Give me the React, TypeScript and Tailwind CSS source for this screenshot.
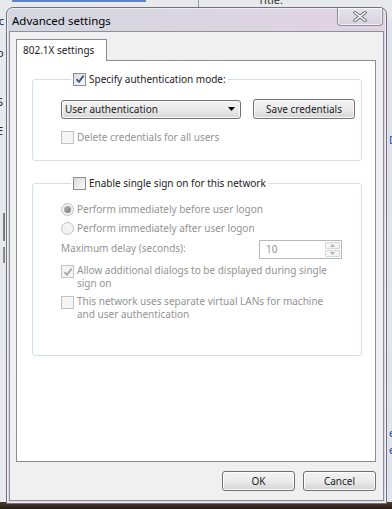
import React from "react";

function CheckBox({ checked = false, disabled = false }: { checked?: boolean; disabled?: boolean }) {
  return (
    <span
      className={`flex h-[13px] w-[13px] shrink-0 items-center justify-center border ${
        disabled ? "border-[#c3c3c3] bg-[#f4f4f4]" : "border-[#8e8f8f] bg-gradient-to-br from-[#dcdcdc] to-[#fbfbfb]"
      }`}
    >
      {checked && (
        <svg width="10" height="10" viewBox="0 0 10 10">
          <path
            d="M1.5 5.2 L4 7.8 L8.6 1.6"
            fill="none"
            stroke={disabled ? "#a8a8a8" : "#3f5584"}
            strokeWidth="1.8"
          />
        </svg>
      )}
    </span>
  );
}

function Radio({ checked = false }: { checked?: boolean }) {
  return (
    <span className="flex h-[13px] w-[13px] shrink-0 items-center justify-center rounded-full border border-[#c3c3c3] bg-[#f2f2f2]">
      {checked && <span className="h-[7px] w-[7px] rounded-full bg-gradient-to-br from-[#b8b8b8] to-[#7e7e7e]" />}
    </span>
  );
}

function Button({ label, className = "" }: { label: string; className?: string }) {
  return (
    <div
      className={`flex h-[20px] items-center justify-center rounded-[3px] border border-[#707070] bg-gradient-to-b from-[#f2f2f2] via-[#ebebeb] to-[#d4d4d4] text-[#1b1b1b] shadow-[inset_0_0_0_1px_#fcfcfc] ${className}`}
    >
      {label}
    </div>
  );
}

export default function App() {
  const disabledText = "text-[#939393]";

  return (
    <div className="relative h-[509px] w-[392px] overflow-hidden bg-[#e7e9ec] font-['Noto_Sans',sans-serif] text-[10px] leading-[13px] text-[#1b1b1b]">
      {/* windows behind the dialog */}
      <div className="absolute left-[12px] top-0 h-[2px] w-[134px] bg-[#5d86c4]" />
      <div className="absolute left-[198px] top-0 h-[8px] w-px bg-[#9a9a9a]" />
      <div className="absolute left-[258px] top-[-7px] text-[11px] text-[#333]">Title:</div>
      <div className="absolute left-[-4px] top-[14px] text-[11px] text-[#222]">ic</div>
      <div className="absolute left-[-3px] top-[46px] text-[11px] text-[#222]">o</div>
      <div className="absolute left-[-3px] top-[95px] text-[11px] text-[#222]">S</div>
      <div className="absolute left-[-3px] top-[124px] text-[11px] text-[#222]">E</div>
      <div className="absolute left-[3px] top-[213px] h-[28px] w-[2px] bg-[#7a7a7a]" />
      <div className="absolute left-[3px] top-[247px] h-[16px] w-[2px] bg-[#8a8a8a]" />
      <div className="absolute left-[386px] top-[20px] h-[500px] w-[6px] bg-[#dfe3ec]" />
      <div className="absolute left-[389px] top-[133px] text-[11px] text-[#2b4f9a]">D</div>
      <div className="absolute left-[389px] top-[426px] text-[11px] text-[#2b4f9a]">e</div>
      <div className="absolute left-[389px] top-[443px] text-[11px] text-[#2b4f9a]">e</div>
      <div className="absolute bottom-0 left-0 h-[7px] w-full bg-gradient-to-b from-[#4a3a30] to-[#2a1e17]" />

      {/* dialog window */}
      <div className="relative ml-[6px] mt-[7px] flex h-[497px] w-[381px] flex-col rounded-t-[7px] border border-[#6f727b] bg-gradient-to-br from-[#d2d7df] via-[#e2d3e4] to-[#d9d8e6] px-[2px] pb-[2px] shadow-[inset_0_0_0_1px_rgba(255,255,255,0.6)]">
        <div className="flex h-[24px] items-start">
          <span className="ml-[3px] mt-[6px] text-[11.5px] leading-[14px] text-black">Advanced settings</span>
          <div className="ml-auto mr-[1px] flex h-[18px] w-[46px] items-center justify-center rounded-b-[4px] border border-t-0 border-[#8a8d96] bg-gradient-to-b from-[#e8e4ee] to-[#d6d1de] shadow-[inset_0_0_0_1px_rgba(255,255,255,0.7)]">
            <svg width="14" height="11" viewBox="0 0 14 11">
              <path d="M2 1.5 L12 9.5 M12 1.5 L2 9.5" stroke="#6c6f78" strokeWidth="3.4" strokeLinecap="square" />
              <path d="M2 1.5 L12 9.5 M12 1.5 L2 9.5" stroke="#ffffff" strokeWidth="1.6" strokeLinecap="square" />
            </svg>
          </div>
        </div>

        {/* client area */}
        <div className="flex flex-1 flex-col border border-[#8d9098] bg-[#f0f0f0] pb-[9px] pl-[6px] pr-[7px] pt-[7px]">
          <div className="flex">
            <div className="relative z-10 -mb-px flex h-[22px] w-[91px] items-center border border-b-0 border-[#898c95] bg-white pl-[6px] pb-[1px]">
              802.1X settings
            </div>
          </div>

          <div className="flex h-[402px] flex-col border border-[#898c95] bg-white pl-[15px] pr-[13px] pt-[11px]">
            {/* group 1 */}
            <fieldset className="min-w-0 rounded-[3px] border border-[#d5dfe5] pb-[16px] pl-[28px] pr-[3px]">
              <legend className="ml-[10px] flex h-[14px] items-center gap-[3px] px-[2px]">
                <CheckBox checked />
                <span>Specify authentication mode:</span>
              </legend>
              <div className="mt-[13px] flex items-center">
                <div className="flex h-[19px] w-[180px] items-center rounded-[3px] border border-[#707070] bg-gradient-to-b from-[#f2f2f2] via-[#ebebeb] to-[#d6d6d6] pl-[3px] pr-[5px] shadow-[inset_0_0_0_1px_#fcfcfc]">
                  <span>User authentication</span>
                  <svg className="ml-auto" width="7" height="4" viewBox="0 0 7 4">
                    <path d="M0 0 L7 0 L3.5 4 Z" fill="#000" />
                  </svg>
                </div>
                <Button label="Save credentials" className="ml-[12px] w-[102px]" />
              </div>
              <div className="mt-[12px] flex items-center gap-[3px]">
                <CheckBox disabled />
                <span className={disabledText}>Delete credentials for all users</span>
              </div>
            </fieldset>

            {/* group 2 */}
            <fieldset className="mt-[15px] h-[180px] min-w-0 rounded-[3px] border border-[#d5dfe5] pl-[28px] pr-[16px]">
              <legend className="ml-[10px] flex h-[14px] items-center gap-[3px] px-[2px]">
                <CheckBox />
                <span>Enable single sign on for this network</span>
              </legend>
              <div className="mt-[11px] flex h-[16px] items-center gap-[3px]">
                <Radio checked />
                <span className={disabledText}>Perform immediately before user logon</span>
              </div>
              <div className="mt-[3px] flex h-[16px] items-center gap-[3px]">
                <Radio />
                <span className={disabledText}>Perform immediately after user logon</span>
              </div>
              <div className="mt-[4px] flex items-center">
                <span className={`w-[198px] pb-[3px] ${disabledText}`}>Maximum delay (seconds):</span>
                <div className="flex h-[19px] w-[83px] items-center border border-[#b5b9bd] bg-white pl-[6px]">
                  <span className={disabledText}>10</span>
                  <div className="ml-auto mr-px flex h-[15px] w-[15px] flex-col gap-px">
                    <div className="flex flex-1 items-center justify-center rounded-[1px] border border-[#d6d6d6] bg-[#f4f4f4]">
                      <svg width="5" height="3" viewBox="0 0 5 3"><path d="M0 3 L5 3 L2.5 0 Z" fill="#b0b0b0" /></svg>
                    </div>
                    <div className="flex flex-1 items-center justify-center rounded-[1px] border border-[#d6d6d6] bg-[#f4f4f4]">
                      <svg width="5" height="3" viewBox="0 0 5 3"><path d="M0 0 L5 0 L2.5 3 Z" fill="#b0b0b0" /></svg>
                    </div>
                  </div>
                </div>
              </div>
              <div className="mt-[5px] flex items-start gap-[3px]">
                <span className="mt-px"><CheckBox checked disabled /></span>
                <span className={disabledText}>
                  Allow additional dialogs to be displayed during single
                  <br />
                  sign on
                </span>
              </div>
              <div className="mt-[5px] flex items-start gap-[3px]">
                <span className="mt-px"><CheckBox disabled /></span>
                <span className={disabledText}>
                  This network uses separate virtual LANs for machine
                  <br />
                  and user authentication
                </span>
              </div>
            </fieldset>
          </div>

          <div className="mt-[9px] flex justify-end gap-[8px]">
            <Button label="OK" className="w-[73px]" />
            <Button label="Cancel" className="w-[73px]" />
          </div>
        </div>
      </div>
    </div>
  );
}
